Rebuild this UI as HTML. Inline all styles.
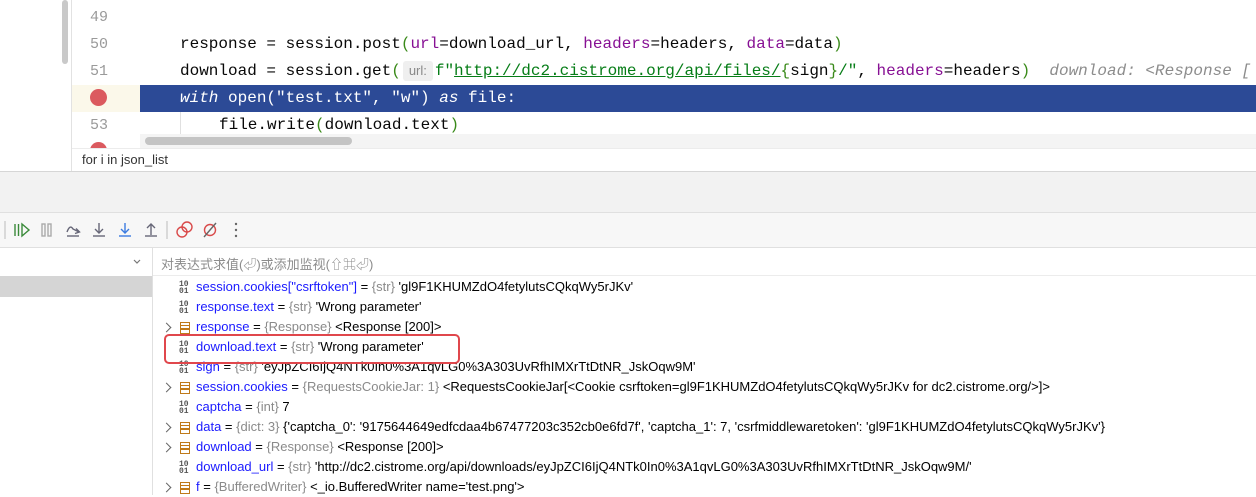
<!DOCTYPE html>
<html><head><meta charset="utf-8"><style>
*{margin:0;padding:0;box-sizing:border-box}
body{width:1256px;height:495px;overflow:hidden;background:#fff;position:relative;font-family:"Liberation Sans","Noto Sans CJK SC",sans-serif}
.abs{position:absolute}
.code{font-family:"Liberation Mono",monospace;font-size:16px;color:#080808;white-space:pre;line-height:27px}
.ln{font-family:"Liberation Mono",monospace;font-size:15px;color:#9a9a9a;position:absolute;left:90px;line-height:27px}
.kw{color:#871094}.gr{color:#067d17}.par{color:#3a8a1a}
.row{position:absolute;left:163px;height:20px;line-height:20px;font-size:13px;color:#000;white-space:nowrap}
.row .n{color:#1a1aff}.row .t{color:#8a8a8a}
.bin{display:inline-block;width:12px;font-family:"Liberation Mono",monospace;font-size:8px;line-height:7px;color:#555;font-weight:bold;vertical-align:middle;margin-right:5px;margin-left:16px}
.obj{display:inline-block;width:10px;height:12px;vertical-align:middle;margin-right:6px;margin-left:10px;border:1.5px solid #c07a1a;position:relative}
.obj:before,.obj:after{content:"";position:absolute;left:0;right:0;height:1.5px;background:#c07a1a}
.obj:before{top:2px}.obj:after{top:5.5px}
.arr{display:inline-block;width:7px;height:7px;border-right:1.5px solid #666;border-bottom:1.5px solid #666;transform:rotate(-45deg);vertical-align:middle}
</style></head><body>
<!-- editor -->
<div class="abs" style="left:62px;top:0;width:6px;height:64px;background:#c9c9c9;border-radius:3px"></div>
<div class="abs" style="left:71px;top:0;width:1px;height:172px;background:#e2e2e2"></div>
<div class="abs" style="left:72px;top:85px;width:68px;height:27px;background:#fbf8ea"></div>
<div class="abs" style="left:140px;top:85px;width:1116px;height:27px;background:#2c4a96"></div>
<div class="ln" style="top:4px">49</div>
<div class="ln" style="top:31px">50</div>
<div class="ln" style="top:58px">51</div>
<div class="abs" style="left:90px;top:89px;width:17px;height:17px;border-radius:50%;background:#db5a5f"></div>
<div class="ln" style="top:112px">53</div>
<div class="abs" style="left:90px;top:142px;width:17px;height:17px;border-radius:50%;background:#db5a5f"></div>
<div class="abs code" style="left:180px;top:31px">response = session.post<span class="par">(</span><span class="kw">url</span>=download_url, <span class="kw">headers</span>=headers, <span class="kw">data</span>=data<span class="par">)</span></div>
<div class="abs code" style="left:180px;top:58px">download = session.get<span class="par">(</span><span style="display:inline-block;width:30px;font-family:'Liberation Sans',sans-serif;font-size:13px;color:#888;background:#efefef;border-radius:3px;text-align:center;margin:0 2px;line-height:20px">url:</span><span class="gr">f"<u>http://dc2.cistrome.org/api/files/</u></span><span class="par">{</span>sign<span class="par">}</span><span class="gr">/"</span>, <span class="kw">headers</span>=headers<span class="par">)</span>  <i style="color:#8c8c8c">download: &lt;Response [</i></div>
<div class="abs code" style="left:180px;top:85px;color:#fff"><i>with</i> open("test.txt", "w") <i>as</i> file:</div>
<div class="abs" style="left:180px;top:112px;width:1px;height:22px;background:#e0e0e0"></div>
<div class="abs code" style="left:219px;top:112px">file.write<span class="par">(</span>download.text<span class="par">)</span></div>
<div class="abs" style="left:140px;top:134px;width:1116px;height:14px;background:#f4f4f4"></div>
<div class="abs" style="left:145px;top:137px;width:207px;height:8px;background:#c4c4c4;border-radius:4px"></div>
<div class="abs" style="left:72px;top:148px;width:1184px;height:24px;background:#fff;border-top:1px solid #ececec"></div>
<div class="abs" style="left:82px;top:152px;font-size:13px;color:#333">for i in json_list</div>
<div class="abs" style="left:0;top:171px;width:1256px;height:1px;background:#d6d6d6"></div>
<div class="abs" style="left:0;top:172px;width:1256px;height:41px;background:#f2f2f2"></div>
<div class="abs" style="left:0;top:212px;width:1256px;height:1px;background:#e0e0e0"></div>
<!-- toolbar -->
<div class="abs" style="left:0;top:213px;width:1256px;height:34px;background:#f7f7f7"></div>
<div class="abs" style="left:0;top:247px;width:1256px;height:1px;background:#e0e0e0"></div>
<svg class="abs" style="left:0;top:213px" width="260" height="34" viewBox="0 0 260 34" fill="none" stroke-width="1.4">
<line x1="5" y1="8" x2="5" y2="26" stroke="#ccc"/>
<line x1="15" y1="11" x2="15" y2="23" stroke="#3a8a3a"/><line x1="18.5" y1="11" x2="18.5" y2="23" stroke="#3a8a3a"/>
<path d="M22 11 L29 17 L22 23 Z" stroke="#3a8a3a"/>
<rect x="42" y="11" width="3" height="12" stroke="#aaa"/><rect x="48" y="11" width="3" height="12" stroke="#aaa"/>
<path d="M67 19 Q70 11 73 16 L79 19" stroke="#667"/><path d="M76 15.5 L79.5 19 L75 20.5" stroke="#667"/><line x1="67" y1="23" x2="79" y2="23" stroke="#667"/>
<line x1="99" y1="10" x2="99" y2="20" stroke="#667"/><path d="M95 16 L99 20 L103 16" stroke="#667"/><line x1="93" y1="23" x2="105" y2="23" stroke="#667"/>
<line x1="125" y1="10" x2="125" y2="20" stroke="#3b7be0"/><path d="M121 16 L125 20 L129 16" stroke="#3b7be0"/><line x1="119" y1="23" x2="131" y2="23" stroke="#3b7be0"/>
<line x1="151" y1="12" x2="151" y2="22" stroke="#667"/><path d="M147 15 L151 11 L155 15" stroke="#667"/><line x1="145" y1="23" x2="157" y2="23" stroke="#667"/>
<line x1="167" y1="8" x2="167" y2="26" stroke="#ccc"/>
<circle cx="182" cy="19" r="5" stroke="#d94a4a"/><circle cx="187" cy="14" r="5" stroke="#d94a4a"/>
<circle cx="210" cy="17" r="5.5" stroke="#d94a4a"/><line x1="204" y1="24" x2="216" y2="10" stroke="#666"/>
<circle cx="236" cy="11" r="1.2" fill="#666" stroke="none"/><circle cx="236" cy="17" r="1.2" fill="#666" stroke="none"/><circle cx="236" cy="23" r="1.2" fill="#666" stroke="none"/>
</svg>
<!-- variables -->
<div class="abs" style="left:152px;top:248px;width:1px;height:247px;background:#e0e0e0"></div>
<div class="abs" style="left:0;top:276px;width:152px;height:21px;background:#d5d5d5"></div>
<svg class="abs" style="left:132px;top:257px" width="10" height="10"><path d="M2 3 L5 6 L8 3" stroke="#777" stroke-width="1.2" fill="none"/></svg>
<div class="abs" style="left:161px;top:254px;font-size:13px;color:#8c8c8c">对表达式求值(⏎)或添加监视(⇧⌘⏎)</div>
<div class="abs" style="left:153px;top:275px;width:1103px;height:1px;background:#ececec"></div>

<div class="row" style="top:277px"><span class="bin">10<br>01</span><span class="n">session.cookies["csrftoken"]</span> = <span class="t">{str}</span> 'gl9F1KHUMZdO4fetylutsCQkqWy5rJKv'</div>
<div class="row" style="top:297px"><span class="bin">10<br>01</span><span class="n">response.text</span> = <span class="t">{str}</span> 'Wrong parameter'</div>
<div class="row" style="top:317px"><span class="arr"></span><span class="obj"></span><span class="n">response</span> = <span class="t">{Response}</span> &lt;Response [200]&gt;</div>
<div class="row" style="top:337px"><span class="bin">10<br>01</span><span class="n">download.text</span> = <span class="t">{str}</span> 'Wrong parameter'</div>
<div class="row" style="top:357px"><span class="bin">10<br>01</span><span class="n">sign</span> = <span class="t">{str}</span> 'eyJpZCI6IjQ4NTk0In0%3A1qvLG0%3A303UvRfhIMXrTtDtNR_JskOqw9M'</div>
<div class="row" style="top:377px"><span class="arr"></span><span class="obj"></span><span class="n">session.cookies</span> = <span class="t">{RequestsCookieJar: 1}</span> &lt;RequestsCookieJar[&lt;Cookie csrftoken=gl9F1KHUMZdO4fetylutsCQkqWy5rJKv for dc2.cistrome.org/&gt;]&gt;</div>
<div class="row" style="top:397px"><span class="bin">10<br>01</span><span class="n">captcha</span> = <span class="t">{int}</span> 7</div>
<div class="row" style="top:417px"><span class="arr"></span><span class="obj"></span><span class="n">data</span> = <span class="t">{dict: 3}</span> {'captcha_0': '9175644649edfcdaa4b67477203c352cb0e6fd7f', 'captcha_1': 7, 'csrfmiddlewaretoken': 'gl9F1KHUMZdO4fetylutsCQkqWy5rJKv'}</div>
<div class="row" style="top:437px"><span class="arr"></span><span class="obj"></span><span class="n">download</span> = <span class="t">{Response}</span> &lt;Response [200]&gt;</div>
<div class="row" style="top:457px"><span class="bin">10<br>01</span><span class="n">download_url</span> = <span class="t">{str}</span> 'http://dc2.cistrome.org/api/downloads/eyJpZCI6IjQ4NTk0In0%3A1qvLG0%3A303UvRfhIMXrTtDtNR_JskOqw9M/'</div>
<div class="row" style="top:477px"><span class="arr"></span><span class="obj"></span><span class="n">f</span> = <span class="t">{BufferedWriter}</span> &lt;_io.BufferedWriter name='test.png'&gt;</div>
<div class="abs" style="left:164px;top:334px;width:296px;height:30px;border:2px solid #e0474c;border-radius:5px"></div>
</body></html>
